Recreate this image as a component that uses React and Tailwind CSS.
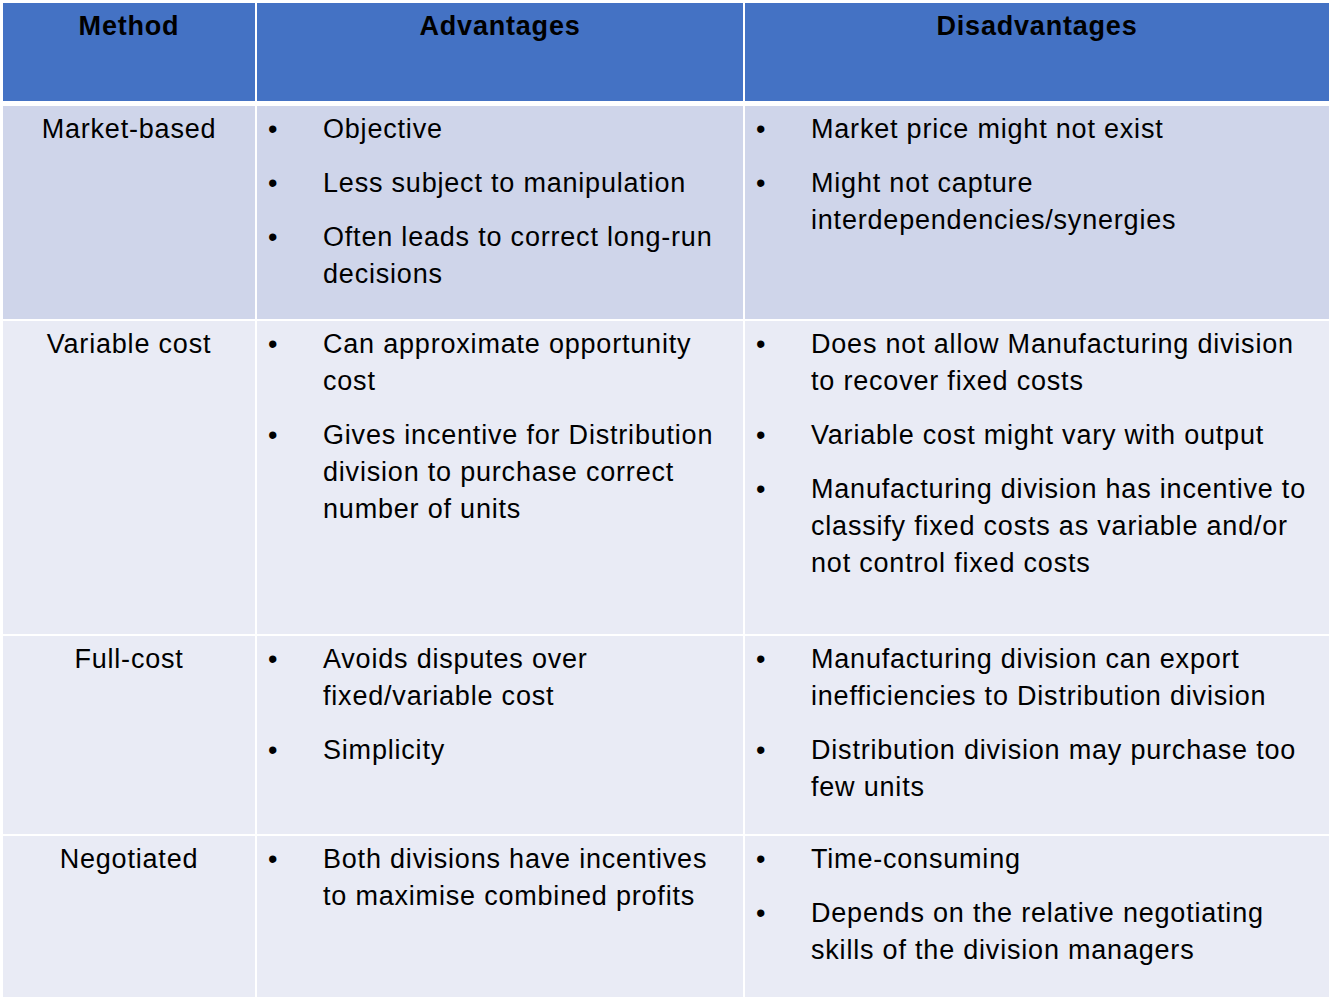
import React from "react";

const rows = [
  {
    method: "Market-based",
    bg: "bg-[#cfd5ea]",
    h: "h-[213px]",
    adv: [["Objective"], ["Less subject to manipulation"], ["Often leads to correct long-run", "decisions"]],
    dis: [["Market price might not exist"], ["Might not capture", "interdependencies/synergies"]],
  },
  {
    method: "Variable cost",
    bg: "bg-[#e9ebf5]",
    h: "h-[313px]",
    adv: [
      ["Can approximate opportunity", "cost"],
      ["Gives incentive for Distribution", "division to purchase correct", "number of units"],
    ],
    dis: [
      ["Does not allow Manufacturing division", "to recover fixed costs"],
      ["Variable cost might vary with output"],
      ["Manufacturing division has incentive to", "classify fixed costs as variable and/or", "not control fixed costs"],
    ],
  },
  {
    method: "Full-cost",
    bg: "bg-[#e9ebf5]",
    h: "h-[198px]",
    adv: [["Avoids disputes over", "fixed/variable cost"], ["Simplicity"]],
    dis: [
      ["Manufacturing division can export", "inefficiencies to Distribution division"],
      ["Distribution division may purchase too", "few units"],
    ],
  },
  {
    method: "Negotiated",
    bg: "bg-[#e9ebf5]",
    h: "h-[161px]",
    adv: [["Both divisions have incentives", "to maximise combined profits"]],
    dis: [["Time-consuming"], ["Depends on the relative negotiating", "skills of the division managers"]],
  },
];

function Bullets({ items }) {
  return (
    <div className="flex flex-col gap-[17px]">
      {items.map((lines, i) => (
        <div key={i} className="flex">
          <span className="w-[66px] pl-[11px] shrink-0 tracking-normal">•</span>
          <div className="flex flex-col">
            {lines.map((l, j) => (
              <span key={j} className="whitespace-nowrap">{l}</span>
            ))}
          </div>
        </div>
      ))}
    </div>
  );
}

export default function App() {
  return (
    <div
      className="w-[1334px] h-[1002px] bg-white text-black text-[27px] tracking-[0.8px] leading-[37px] pt-[3px] pl-[3px] overflow-hidden"
      style={{ fontFamily: '"Liberation Sans", Arial, sans-serif' }}
    >
      <div className="grid grid-cols-[252px_486px_584px] gap-x-[2px] w-[1326px]">
        <div className="h-[98px] bg-[#4472c4] font-bold text-center pt-[5px]">Method</div>
        <div className="h-[98px] bg-[#4472c4] font-bold text-center pt-[5px]">Advantages</div>
        <div className="h-[98px] bg-[#4472c4] font-bold text-center pt-[5px]">Disadvantages</div>
      </div>
      <div className="h-[5px]" />
      {rows.map((r, i) => (
        <div key={i} className={`grid grid-cols-[252px_486px_584px] gap-x-[2px] w-[1326px] ${i > 0 ? "mt-[2px]" : ""}`}>
          <div className={`${r.h} ${r.bg} text-center pt-[5px]`}>{r.method}</div>
          <div className={`${r.h} ${r.bg} pt-[5px]`}>
            <Bullets items={r.adv} />
          </div>
          <div className={`${r.h} ${r.bg} pt-[5px]`}>
            <Bullets items={r.dis} />
          </div>
        </div>
      ))}
    </div>
  );
}
